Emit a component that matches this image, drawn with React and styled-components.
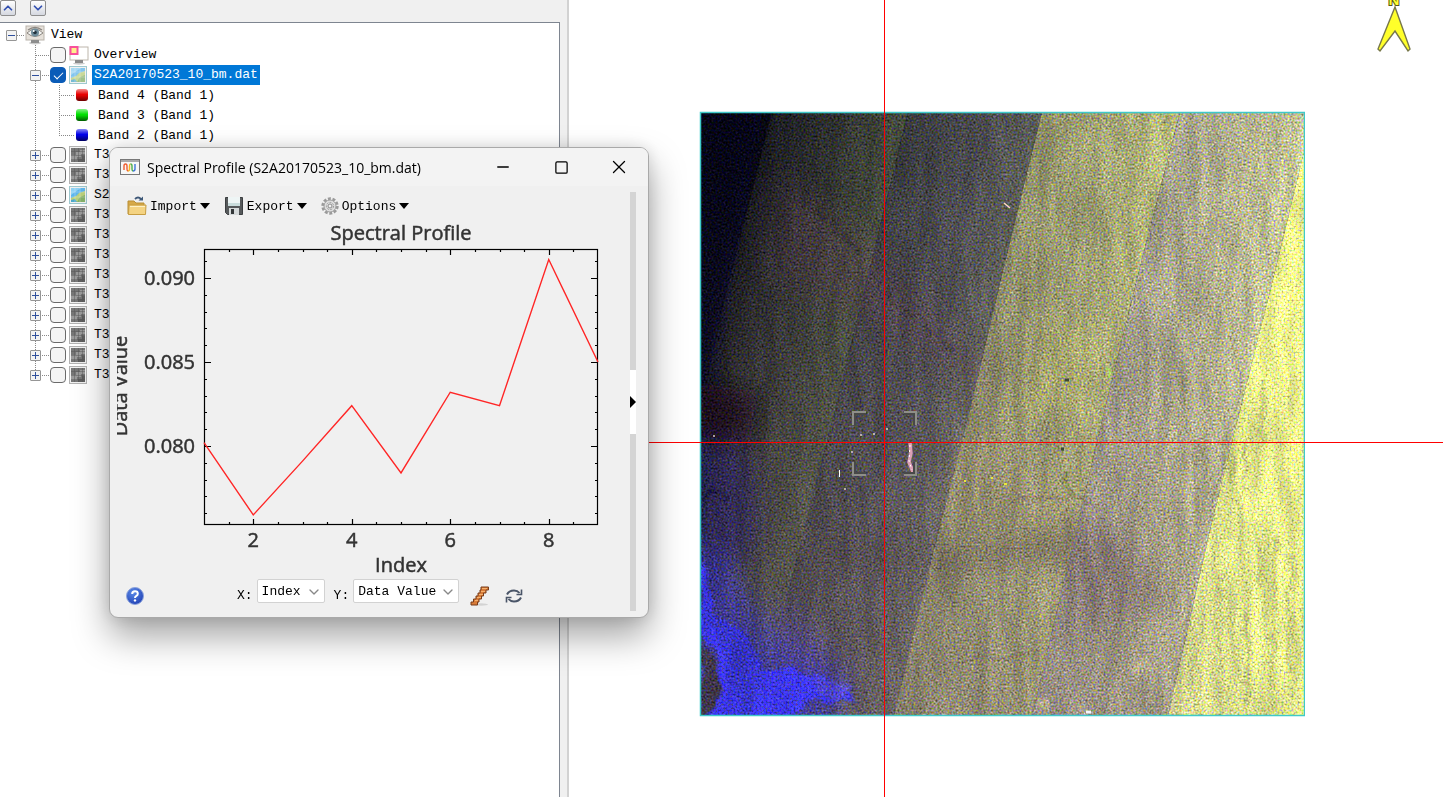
import { useState } from "react";
import styled, { createGlobalStyle } from "styled-components";
import { ChevronUp, ChevronDown, Minus, Square, X } from "lucide-react";

const bands = [
  { name: "Band 4 (Band 1)", color: "#e80000", dark: "#6d0000" },
  { name: "Band 3 (Band 1)", color: "#00e000", dark: "#005c00" },
  { name: "Band 2 (Band 1)", color: "#0000e8", dark: "#00005e" },
];

const layers = ["T3", "T3", "S2", "T3", "T3", "T3", "T3", "T3", "T3", "T3", "T3", "T3"];

const profile = [0.0802, 0.0759, 0.0791, 0.0824, 0.0784, 0.0832, 0.0824, 0.0911, 0.085];

const EyeIcon = () => (
  <svg width="20" height="20" viewBox="0 0 20 20">
    <rect x="1" y="1" width="18" height="14" fill="#e6e1da" stroke="#b9b3ab" />
    <ellipse cx="10" cy="18" rx="6" ry="1.5" fill="#ccc" />
    <rect x="6" y="15" width="8" height="3" fill="#8d8d8d" />
    <path d="M2 8Q10 0 18 8Q10 15 2 8Z" fill="#f4f4f2" stroke="#8b8680" />
    <path d="M3 5Q10 0 17 5" fill="none" stroke="#8b8680" strokeWidth="1.5" />
    <circle cx="10" cy="7.5" r="4" fill="#6e8c9a" />
    <circle cx="10" cy="7.5" r="1.8" fill="#22323c" />
    <circle cx="8.7" cy="6" r="1" fill="#fff" />
  </svg>
);

const OverviewIcon = () => (
  <svg width="20" height="20" viewBox="0 0 20 20">
    <rect x="1" y="2" width="18" height="13" fill="#fff" stroke="#bdb6ab" />
    <ellipse cx="10" cy="18.5" rx="6" ry="1.2" fill="#ccc" />
    <rect x="6" y="15" width="8" height="3" fill="#8a8a8a" />
    <rect x="1.5" y="2" width="7" height="7" fill="#ffef8d" stroke="#f8509c" strokeWidth="2" />
  </svg>
);

const RasterIcon = ({ color, faded }) => (
  <svg width="18" height="20" viewBox="0 0 18 20">
    <rect x="0.5" y="1.5" width="17" height="17" fill="#f1f1f1" stroke={color ? "#9fc9cf" : "#b3b3b3"} />
    {color ? (
      <g opacity={faded ? 0.75 : 1}>
        <rect x="2" y="3" width="14" height="14" fill="#5fb7ee" />
        <path d="M2 10L9 5L12 3H2Z" fill="#8fd2f5" />
        <path d="M2 13L7 11L10 8L16 6V17H2Z" fill="#bcd27c" />
        <path d="M8 17L11 12L16 10V17Z" fill="#86b36a" />
        <path d="M2 15L6 14L8 17H2Z" fill="#4eaacb" />
        <path d="M6 3V17M11 3V17M2 7H16M2 12H16" stroke="#fff" strokeOpacity="0.25" />
      </g>
    ) : (
      <g>
        <rect x="2" y="3" width="14" height="14" fill="#777" />
        <path d="M2 10H7V7H11V5H16V9H12V12H8V15H2Z" fill="#9b9b9b" />
        <path d="M9 17V14H13V11H16V17Z" fill="#606060" />
        <path d="M5.5 3V17M9.5 3V17M13.5 3V17M2 6.5H16M2 10.5H16M2 14.5H16" stroke="#565656" strokeOpacity="0.45" />
      </g>
    )}
  </svg>
);

const ProfileIcon = () => (
  <svg width="20" height="16" viewBox="0 0 20 16">
    <rect x="0.5" y="0.5" width="19" height="15" fill="#f7f7f7" stroke="#777" />
    <rect x="1" y="1" width="18" height="2" fill="#aaa" />
    <path d="M4 11V7Q4 5 5.500 5T7 7V10Q7 12 8 12" fill="none" stroke="#ef5c2f" strokeWidth="1.4" />
    <path d="M8 12Q9.500 12 9.500 10V7Q9.500 5 10.500 5" fill="none" stroke="#f5b326" strokeWidth="1.4" />
    <path d="M10.500 5Q12 5 12 7V10Q12 12 13 12" fill="none" stroke="#4baf4c" strokeWidth="1.4" />
    <path d="M13 12Q15 12 15 10V5" fill="none" stroke="#3d74d8" strokeWidth="1.4" />
  </svg>
);

const FolderIcon = () => (
  <svg width="20" height="20" viewBox="0 0 20 20">
    <path d="M1 5H7L9 7H17V18H1Z" fill="#d7a947" stroke="#b98e35" />
    <path d="M8 3Q11 0 14 3" fill="none" stroke="#3e5878" strokeWidth="1.8" />
    <path d="M11.500 4.500H16V0.500Z" fill="#3e5878" />
    <path d="M2 9H19L18.500 18.500H1.500Z" fill="#f4d382" stroke="#c79d42" />
    <path d="M3 10.500H18" stroke="#fff1c4" />
  </svg>
);

const DiskIcon = () => (
  <svg width="20" height="20" viewBox="0 0 20 20">
    <path d="M1.500 1.500H18.500V18.500H3.500L1.500 16.500Z" fill="#56595b" stroke="#3c3f41" />
    <rect x="4" y="1" width="12" height="9" fill="#eef5f5" />
    <path d="M4 7H16V10H4Z" fill="#c9dcdc" />
    <rect x="5" y="12" width="10" height="7" fill="#d5d9da" />
    <rect x="7" y="13" width="3" height="5" fill="#333638" />
  </svg>
);

const GearIcon = () => (
  <svg width="18" height="18" viewBox="0 0 18 18">
    <circle cx="9" cy="9" r="7.2" fill="none" stroke="#9a9a9a" strokeWidth="3" strokeDasharray="2.9 1.62" />
    <circle cx="9" cy="9" r="6" fill="#dedede" stroke="#a0a0a0" />
    <circle cx="9" cy="9" r="3.6" fill="none" stroke="#9c9c9c" strokeDasharray="2 1.2" />
    <circle cx="9" cy="9" r="2" fill="#f1f1f1" stroke="#8b8b8b" />
  </svg>
);

const HelpIcon = () => (
  <svg width="20" height="20" viewBox="0 0 20 20">
    <defs>
      <radialGradient id="help" cx="0.4" cy="0.3" r="0.8">
        <stop offset="0" stopColor="#5b8ae8" />
        <stop offset="1" stopColor="#1c3bb0" />
      </radialGradient>
    </defs>
    <circle cx="10" cy="10" r="8.5" fill="url(#help)" stroke="#8da4dc" />
    <path d="M7.200 8Q7.200 5.300 10 5.300T12.800 7.700Q12.800 9 11.400 9.800T10 12" fill="none" stroke="#fff" strokeWidth="2" />
    <circle cx="10" cy="14.4" r="1.2" fill="#fff" />
  </svg>
);

const StairsIcon = () => (
  <svg width="20" height="20" viewBox="0 0 20 20">
    <ellipse cx="11" cy="18.5" rx="7" ry="1.2" fill="#d3d3d3" />
    <path d="M11 1H18.500V4H16V7H13.500V10H11.500V13H9V16H7.500V19H1V16H3.500V13H6V10H8V7H10V4H11Z" fill="#d97c38" stroke="#793d1b" />
    <path d="M12 2.500H17M11 5.500H15M9 8.500H13M7 11.500H11M5 14.500H8" stroke="#f5b06d" />
  </svg>
);

const RefreshIcon = () => (
  <svg width="18" height="16" viewBox="0 0 18 16" fill="none" stroke="#4a5568" strokeWidth="2">
    <path d="M2 6.500Q4 2.500 9 2.500Q12.500 2.500 14.500 5" />
    <path d="M16.500 1.500V6.500H11.500" strokeWidth="1.6" />
    <path d="M16 9.500Q14 13.500 9 13.500Q5.500 13.500 3.500 11" />
    <path d="M1.500 14.500V9.500H6.500" strokeWidth="1.6" />
  </svg>
);

const NorthArrow = () => (
  <svg width="36" height="54" viewBox="0 0 36 54">
    <text x="18" y="5" textAnchor="middle" fontSize="15" fontWeight="bold" fill="#ffff30" stroke="#55551c" strokeWidth="2" paintOrder="stroke">N</text>
    <path d="M19 7L34 49L32 51L19 31L4 51L2 49Z" fill="#ffff2a" stroke="#77774a" strokeWidth="1.4" />
  </svg>
);

const SpectralChart = () => {
  const px = (v) => 87 + (v - 1) * 49.25;
  const py = (v) => 56 + (0.09 - v) * 16800;
  const points = profile.map((v, i) => `${px(i + 1)},${py(v)}`).join(" ");
  const xTicks = Array.from({ length: 15 }, (_, i) => 1.5 + i * 0.5);
  const yTicks = Array.from({ length: 16 }, (_, i) => 76 + i);

  return (
    <ChartSvg viewBox="0 -6 500 362" role="img" aria-label="Spectral Profile">
      <rect x="87.5" y="27.5" width="393" height="275" fill="none" stroke="#000" strokeWidth="1.2" />
      {xTicks.map((v) => {
        const len = v % 2 === 0 ? 6 : 3;
        const x = Math.round(px(v)) + 0.5;
        return <path key={v} d={`M${x} 27v${len}M${x} 303v-${len}`} stroke="#000" strokeWidth="1.2" />;
      })}
      {yTicks.map((v) => {
        const len = v % 5 === 0 ? 7 : 3;
        const y = Math.round(py(v / 1000)) + 0.5;
        return <path key={v} d={`M87 ${y}h${len}M481 ${y}h-${len}`} stroke="#000" strokeWidth="1.2" />;
      })}
      <polyline points={points} fill="none" stroke="#ff2626" strokeWidth="1.4" />
      <g stroke="#333" strokeWidth="0.5">
        <text x="284" y="18" textAnchor="middle">Spectral Profile</text>
        <text x="284" y="350" textAnchor="middle">Index</text>
        <text transform="translate(10 164) rotate(-90)" textAnchor="middle">Data Value</text>
        {[2, 4, 6, 8].map((v) => (
          <text key={v} x={px(v)} y="325" textAnchor="middle">{v}</text>
        ))}
        {[0.09, 0.085, 0.08].map((v) => (
          <text key={v} x="78" y={py(v) + 7} textAnchor="end">{v.toFixed(3)}</text>
        ))}
      </g>
    </ChartSvg>
  );
};

const SatelliteScene = () => (
  <svg width="606" height="606" viewBox="-1 -1 606 606">
    <defs>
      <linearGradient id="s0" x1="0" y1="0" x2="0" y2="1">
        <stop offset="0" stopColor="#070716" />
        <stop offset="1" stopColor="#15152e" />
      </linearGradient>
      <linearGradient id="s1" gradientUnits="userSpaceOnUse" x1="62" y1="0" x2="200" y2="34">
        <stop offset="0" stopColor="#17181f" />
        <stop offset="0.5" stopColor="#2b2d2c" />
        <stop offset="1" stopColor="#454b3e" />
      </linearGradient>
      <linearGradient id="s2" gradientUnits="userSpaceOnUse" x1="208" y1="0" x2="334" y2="32">
        <stop offset="0" stopColor="#37393c" />
        <stop offset="0.6" stopColor="#4a4a4e" />
        <stop offset="1" stopColor="#5c5e58" />
      </linearGradient>
      <linearGradient id="s3" gradientUnits="userSpaceOnUse" x1="342" y1="0" x2="472" y2="32">
        <stop offset="0" stopColor="#8d8d68" />
        <stop offset="0.6" stopColor="#a1a275" />
        <stop offset="1" stopColor="#b4b67c" />
      </linearGradient>
      <linearGradient id="s4" gradientUnits="userSpaceOnUse" x1="480" y1="0" x2="610" y2="32">
        <stop offset="0" stopColor="#a29f88" />
        <stop offset="0.6" stopColor="#b6b490" />
        <stop offset="1" stopColor="#c6c79a" />
      </linearGradient>
      <linearGradient id="s5" x1="1" y1="0" x2="0" y2="1">
        <stop offset="0" stopColor="#fbff8e" />
        <stop offset="0.6" stopColor="#e0e58c" />
        <stop offset="1" stopColor="#cac98c" />
      </linearGradient>
      <linearGradient id="warm" x1="0" y1="0" x2="0" y2="1">
        <stop offset="0.1" stopColor="#7b6a70" stopOpacity="0" />
        <stop offset="1" stopColor="#7b6a70" stopOpacity="0.45" />
      </linearGradient>
      <filter id="grain" x="0" y="0" width="100%" height="100%" colorInterpolationFilters="sRGB">
        <feTurbulence type="fractalNoise" baseFrequency="0.5" numOctaves="2" seed="4" result="n" />
        <feColorMatrix in="n" values="1.5 0.3 0 0 -0.4  0.5 1.3 0 0 -0.4  0 0 2.6 0 -0.8  0 0 0 0 1" result="fine" />
        <feTurbulence type="fractalNoise" baseFrequency="0.08 0.014" numOctaves="3" seed="21" />
        <feColorMatrix values="2 0 0 0 -0.5  2 0 0 0 -0.5  2 0 0 0 -0.5  0 0 0 0 1" result="streak" />
        <feComposite in="SourceGraphic" in2="fine" operator="arithmetic" k1="0.6" k2="0.7" k3="0.18" k4="-0.08" result="a" />
        <feComposite in="a" in2="streak" operator="arithmetic" k1="0.18" k2="0.91" />
      </filter>
      <filter id="soft" filterUnits="userSpaceOnUse" x="-100" y="-100" width="804" height="804">
        <feGaussianBlur stdDeviation="12" />
      </filter>
      <filter id="rough" filterUnits="userSpaceOnUse" x="-50" y="-50" width="704" height="704">
        <feTurbulence type="fractalNoise" baseFrequency="0.04" numOctaves="4" result="t" />
        <feDisplacementMap in="SourceGraphic" in2="t" scale="16" xChannelSelector="R" yChannelSelector="G" />
        <feGaussianBlur stdDeviation="1.2" />
      </filter>
      <clipPath id="frame">
        <rect width="604" height="604" />
      </clipPath>
      <clipPath id="strip5">
        <path d="M604 40V604H468L510 418L545 278L573 168Z" />
      </clipPath>
    </defs>
    <g clipPath="url(#frame)">
      <g filter="url(#grain)">
        <rect width="604" height="604" fill="url(#s0)" />
        <path d="M72 0H208L135 298L73 540L58 604H0V300L22 200Z" fill="url(#s1)" />
        <path d="M208 0H342L305 150L270 298L230 453L194 604H58L73 540L135 298Z" fill="url(#s2)" />
        <path d="M342 0H480L443 143L407 288L332 604H194L230 453L270 298L305 150Z" fill="url(#s3)" />
        <path d="M480 0H604V40L573 168L545 278L510 418L468 604H332L407 288L443 143Z" fill="url(#s4)" />
        <path d="M604 40V604H468L510 418L545 278L573 168Z" fill="url(#s5)" />
        <path d="M0 0H604L468 604H0Z" fill="url(#warm)" />
        <g filter="url(#soft)">
          <path d="M-20 -20H66L45 100L25 230L0 440H-20Z" fill="#02020e" opacity="0.6" />
          <path d="M80 60L170 130L280 250L300 290L210 230L70 160Z" fill="#584050" opacity="0.3" />
          <path d="M105 424Q200 455 290 430T375 380L360 450Q240 470 110 445Z" fill="#4a3f3a" opacity="0.35" />
          <path d="M375 400L425 420L470 490L380 520L360 450Z" fill="#705f64" opacity="0.5" />
          <path d="M350 200L400 220L385 300L310 310Z" fill="#c4c26a" opacity="0.3" />
          <path d="M-10 330L50 340L60 430L-10 500Z" fill="#262260" opacity="0.6" />
          <path d="M-20 430L20 440L80 530L150 560L130 624H-20Z" fill="#3531a8" opacity="0.65" />
          <path d="M80 480L130 540L150 580L80 570Z" fill="#4b3d96" opacity="0.5" />
          <path d="M265 310L380 400L350 420L240 410Z" fill="#a59777" opacity="0.3" />
          <path d="M0 270L60 280L50 330L0 330Z" fill="#0b0a12" opacity="0.6" />
        </g>
        <g filter="url(#rough)">
          <path d="M0 448L8 462L10 500L18 530L35 522L50 550L68 560L100 556L130 566L152 582L155 590L112 588L86 606H10L22 580L15 540L0 520Z" fill="#3a35f0" />
          <path d="M5 500L45 520L62 552L52 604H36L34 570Z" fill="#3430c8" />
          <path d="M0 530L12 545L22 575L10 604H0Z" fill="#3a3146" />
          <path d="M108 560L152 572L150 590L122 584Z" fill="#5348c0" opacity="0.7" />
          <path d="M88 68L93 78M104 80L110 95M118 95L124 108M130 105L138 122M143 118L150 130M152 132L160 142M184 178L192 190M205 200L212 208M226 215L232 225M246 230L252 240" stroke="#1d1f24" strokeWidth="3" opacity="0.35" />
          <path d="M0 388L14 378L28 388" fill="none" stroke="#0c0b28" strokeWidth="2" opacity="0.7" />
          <path d="M366 358L370 385" stroke="#6b6f39" strokeWidth="5" opacity="0.5" />
          <path d="M310 390L375 386L400 394" fill="none" stroke="#6f5d54" strokeWidth="3" opacity="0.4" />
          <path d="M265 546L345 543" stroke="#6d6050" strokeWidth="2" opacity="0.5" />
          <path d="M335 590L350 594M430 565L450 550" stroke="#d5c8a0" strokeWidth="8" opacity="0.4" />
          <g clipPath="url(#strip5)" stroke="#8c8c5c" strokeWidth="6" opacity="0.3">
            <path d="M558 410V470M575 425V500M530 300V370M560 270V330M590 440V560M545 330V380M520 460V560M572 520V600M548 500V590" />
          </g>
          <path d="M525 340L518 388M497 330V400M480 250V290" stroke="#7f7d66" strokeWidth="6" opacity="0.35" />
        </g>
      </g>
      <path d="M304 91L310 96" stroke="#ffd7c4" strokeWidth="1.5" />
      <path d="M210 331L211 341L209 350L213 360" fill="none" stroke="#dba0b4" strokeWidth="3.5" />
      <path d="M210 333L209 349L212 358" fill="none" stroke="#fff" strokeDasharray="2 3" />
      <path d="M139.500 358V365" stroke="#fff" />
      <path d="M145 376v2M152 339v2M161 322v2M187 316v2M174 321v2M153 303v2M14 323v2" stroke="#e6d9d4" strokeWidth="1.4" />
      <path d="M264 369h2M304 372h3M291 366h2" stroke="#e8e83c" strokeWidth="2" />
      <path d="M406 256L410 258L409 266" fill="none" stroke="#a6ff3d" strokeWidth="2" opacity="0.6" />
      <path d="M365 268h4M361 337h3" stroke="#3d4933" strokeWidth="3" />
      <path d="M386 600h5" stroke="#f4f4ff" strokeWidth="3" />
    </g>
    <rect x="0.5" y="0.5" width="604" height="603" fill="none" stroke="#3fc9c9" strokeWidth="1.5" />
    <path d="M155 313V302H166M204 302H214V313M155 350V361H166M204 361H214V350" fill="none" stroke="#484848" strokeWidth="2" />
    <path d="M153 313V300H166M204 300H216V313M153 350V363H166M204 363H216V350" fill="none" stroke="#8e8e88" strokeWidth="2" />
  </svg>
);

const App = () => {
  const [active, setActive] = useState(true);

  return (
    <Page>
      <GlobalStyle />
      <LayerPanel>
        <PanelTools>
          <StepButton aria-label="Move up"><ChevronUp size={14} strokeWidth={3} /></StepButton>
          <StepButton aria-label="Move down"><ChevronDown size={14} strokeWidth={3} /></StepButton>
        </PanelTools>
        <Tree>
          <RootRow>
            <Toggle aria-label="Collapse View" />
            <Dots />
            <EyeIcon />
            <RowLabel as="span">View</RowLabel>
          </RootRow>
          <Row>
            <Branch $leaf />
            <Dots />
            <Check type="checkbox" id="overview" />
            <IconCell><OverviewIcon /></IconCell>
            <RowLabel htmlFor="overview">Overview</RowLabel>
          </Row>
          <Row>
            <Branch><Toggle aria-label="Collapse layer" /></Branch>
            <Dots />
            <Check type="checkbox" id="s2a" checked={active} onChange={() => setActive(!active)} />
            <IconCell><RasterIcon color faded /></IconCell>
            <RowLabel htmlFor="s2a" $selected>S2A20170523_10_bm.dat</RowLabel>
          </Row>
          {bands.map((band, i) => (
            <Row key={band.name}>
              <Branch />
              <BandBranch $last={i === bands.length - 1} />
              <Swatch $color={band.color} $dark={band.dark} />
              <BandName>{band.name}</BandName>
            </Row>
          ))}
          {layers.map((name, i) => (
            <Row key={i}>
              <Branch $last={i === layers.length - 1}><Toggle $plus aria-label="Expand layer" /></Branch>
              <Dots />
              <Check type="checkbox" id={`layer${i}`} />
              <IconCell><RasterIcon color={name === "S2"} /></IconCell>
              <RowLabel htmlFor={`layer${i}`}>{name}</RowLabel>
            </Row>
          ))}
        </Tree>
      </LayerPanel>

      <MapView>
        <ScenePlace><SatelliteScene /></ScenePlace>
        <CrossH />
        <CrossV />
        <ArrowPlace><NorthArrow /></ArrowPlace>
      </MapView>

      <Dialog role="dialog" aria-labelledby="dialog-title">
        <TitleBar>
          <ProfileIcon />
          <Title id="dialog-title">Spectral Profile (S2A20170523_10_bm.dat)</Title>
          <WindowButton aria-label="Minimize"><Minus size={18} strokeWidth={1.8} /></WindowButton>
          <WindowButton aria-label="Maximize"><Square size={15} strokeWidth={2} /></WindowButton>
          <WindowButton aria-label="Close"><X size={22} strokeWidth={1.4} /></WindowButton>
        </TitleBar>
        <DialogBody>
          <PlotColumn>
            <Menu>
              <MenuButton><FolderIcon />Import<Caret /></MenuButton>
              <MenuButton><DiskIcon />Export<Caret /></MenuButton>
              <MenuButton><GearIcon />Options<Caret /></MenuButton>
            </Menu>
            <SpectralChart />
            <AxisBar>
              <IconButton aria-label="Help"><HelpIcon /></IconButton>
              <AxisFields>
                <AxisLabel htmlFor="x-axis">X:</AxisLabel>
                <SelectWrap $width="68px">
                  <Select id="x-axis"><option>Index</option></Select>
                  <ChevronDown size={16} strokeWidth={2} />
                </SelectWrap>
                <AxisLabel htmlFor="y-axis">Y:</AxisLabel>
                <SelectWrap $width="106px">
                  <Select id="y-axis"><option>Data Value</option></Select>
                  <ChevronDown size={16} strokeWidth={2} />
                </SelectWrap>
              </AxisFields>
              <IconButton aria-label="Stack plots"><StairsIcon /></IconButton>
              <IconButton aria-label="Reset"><RefreshIcon /></IconButton>
            </AxisBar>
          </PlotColumn>
          <Splitter>
            <SplitterButton aria-label="Show side panel"><SideCaret /></SplitterButton>
          </Splitter>
        </DialogBody>
      </Dialog>
    </Page>
  );
};

export default App;

const GlobalStyle = createGlobalStyle`
  * {
    box-sizing: border-box;
  }
  body {
    margin: 0;
    overflow: hidden;
    font-family: "Liberation Mono", "Noto Sans CJK SC", monospace;
    font-size: 13px;
    color: #000;
    background: #fff;
  }
  button, select, input {
    font: inherit;
    color: inherit;
    margin: 0;
    padding: 0;
  }
  button {
    border: 0;
    background: none;
  }
  svg {
    display: block;
    flex: none;
  }
`;

const dotsX = "repeating-linear-gradient(90deg, #888 0 1px, transparent 1px 2px)";
const dotsY = "repeating-linear-gradient(180deg, #888 0 1px, transparent 1px 2px)";

const Page = styled.div`
  position: relative;
  display: flex;
  min-height: 100vh;
`;

const LayerPanel = styled.aside`
  display: flex;
  flex-direction: column;
  flex: none;
  width: 569px;
  padding-right: 7px;
  background: #f0f0f0;
  border-right: 2px solid #d2d2d2;
`;

const PanelTools = styled.div`
  display: flex;
  gap: 14px;
  height: 22px;
`;

const StepButton = styled.button`
  display: flex;
  align-items: center;
  justify-content: center;
  width: 16px;
  height: 16px;
  color: #3350b0;
  background: linear-gradient(#fff, #d5d8e0);
  border: 1px solid #8e8e8e;
  border-radius: 2px;
`;

const Tree = styled.div`
  flex: 1;
  padding-top: 2px;
  background: #fff;
  border-top: 1px solid #7e8590;
  border-right: 1px solid #7e8590;
`;

const Row = styled.div`
  display: flex;
  align-items: center;
  height: 20px;
  padding-left: 30px;
`;

const RootRow = styled(Row)`
  padding-left: 6px;
`;

const Branch = styled.span`
  display: flex;
  align-items: center;
  align-self: stretch;
  width: 12px;
  background: ${(p) => (p.$leaf ? `${dotsX} 6px 10px / 6px 1px no-repeat, ` : "")}
    ${dotsY} 5px 0 / 1px ${(p) => (p.$last ? "10px" : "100%")} no-repeat;
`;

const BandBranch = styled.span`
  align-self: stretch;
  width: 15px;
  margin: 0 2px 0 17px;
  background: ${dotsX} 0 10px / 100% 1px no-repeat,
    ${dotsY} 0 0 / 1px ${(p) => (p.$last ? "10px" : "100%")} no-repeat;
`;

const Dots = styled.span`
  width: 8px;
  height: 1px;
  background: ${dotsX};
`;

const Toggle = styled.button`
  flex: none;
  width: 11px;
  height: 11px;
  border: 1px solid #969696;
  border-radius: 1px;
  background: linear-gradient(#2f4f9c, #2f4f9c) center / 7px 1px no-repeat,
    linear-gradient(#2f4f9c, #2f4f9c) center / 1px ${(p) => (p.$plus ? "7px" : "0")} no-repeat,
    #f3f3f3;
`;

const Check = styled.input`
  appearance: none;
  flex: none;
  width: 16px;
  height: 16px;
  border: 1px solid #6a6a6a;
  border-radius: 4px;
  background: #f4f4f4;

  &:checked {
    background: #0a5cb8;
    border-color: #0a5cb8;
  }
  &:checked::after {
    content: "";
    display: block;
    width: 8px;
    height: 4px;
    margin: 4px 3px;
    border: solid #fff;
    border-width: 0 0 1px 1px;
    transform: rotate(-45deg);
  }
`;

const IconCell = styled.span`
  display: flex;
  width: 20px;
  margin: 0 3px;
`;

const RowLabel = styled.label`
  height: 20px;
  line-height: 20px;
  margin-left: ${(p) => (p.htmlFor ? "0" : "4px")};
  padding: 0 2px;
  color: ${(p) => (p.$selected ? "#fff" : "#000")};
  background: ${(p) => (p.$selected ? "#0078d7" : "none")};
`;

const Swatch = styled.span`
  width: 12px;
  height: 12px;
  border-radius: 3px;
  background: linear-gradient(#fff8, transparent 45%), linear-gradient(${(p) => p.$color} 50%, ${(p) => p.$dark});
`;

const BandName = styled.span`
  margin-left: 10px;
`;

const MapView = styled.main`
  position: relative;
  flex: 1;
  overflow: hidden;
  background: #fff;
`;

const ScenePlace = styled.div`
  position: absolute;
  left: 130px;
  top: 111px;
`;

const CrossH = styled.div`
  position: absolute;
  left: 0;
  right: 0;
  top: 442px;
  height: 1px;
  background: #f00;
`;

const CrossV = styled.div`
  position: absolute;
  top: 0;
  bottom: 0;
  left: 315px;
  width: 1px;
  background: #f00;
`;

const ArrowPlace = styled.div`
  position: absolute;
  top: 0;
  right: 31px;
  font-family: "Liberation Sans", sans-serif;
`;

const Dialog = styled.section`
  position: absolute;
  left: 109px;
  top: 147px;
  width: 540px;
  overflow: hidden;
  background: #f0f0f0;
  border: 1px solid #a9a9a9;
  border-radius: 9px;
  box-shadow: 0 18px 36px rgba(0, 0, 0, 0.36), 0 0 16px rgba(0, 0, 0, 0.12);
`;

const TitleBar = styled.header`
  display: flex;
  align-items: center;
  height: 38px;
  padding-left: 10px;
  background: #f3f3f3;
`;

const Title = styled.h1`
  flex: 1;
  margin: 0 0 0 7px;
  font-family: "Open Sans", "Noto Sans", sans-serif;
  font-size: 14px;
  font-weight: 400;
`;

const WindowButton = styled.button`
  display: flex;
  align-items: center;
  justify-content: center;
  width: 58px;
  height: 38px;
`;

const DialogBody = styled.div`
  display: flex;
  justify-content: space-between;
  padding: 6px 12px 6px 7px;
`;

const PlotColumn = styled.div`
  display: flex;
  flex-direction: column;
  width: 500px;
`;

const Menu = styled.nav`
  display: flex;
  align-items: flex-end;
  gap: 14px;
  height: 24px;
  padding-left: 10px;
`;

const MenuButton = styled.button`
  display: flex;
  align-items: center;
  gap: 3px;
  height: 20px;
`;

const Caret = styled.span`
  border: solid transparent;
  border-width: 6px 5px 0;
  border-top-color: #000;
`;

const ChartSvg = styled.svg`
  width: 100%;
  overflow: hidden;
  font-family: "Open Sans", "Noto Sans", sans-serif;
  font-size: 20px;
  fill: #333;
`;

const AxisBar = styled.div`
  display: flex;
  align-items: flex-start;
  gap: 15px;
  height: 33px;
  padding-left: 8px;
`;

const IconButton = styled.button`
  display: flex;
  align-items: center;
  height: 20px;
  margin-top: 8px;
`;

const AxisFields = styled.div`
  display: flex;
  gap: 4px;
  margin: 1px -4px 0 72px;
`;

const AxisLabel = styled.label`
  padding: 9px 0 0 5px;
`;

const SelectWrap = styled.div`
  position: relative;
  width: ${(p) => p.$width};

  svg {
    position: absolute;
    right: 3px;
    top: 5px;
    color: #888;
    pointer-events: none;
  }
`;

const Select = styled.select`
  appearance: none;
  width: 100%;
  height: 24px;
  padding-left: 4px;
  background: #fff;
  border: 1px solid #d2d2d2;
  border-radius: 2px;
`;

const Splitter = styled.div`
  display: flex;
  align-items: center;
  width: 6px;
  background: #d4d4d4;
`;

const SplitterButton = styled.button`
  display: flex;
  align-items: center;
  width: 6px;
  height: 64px;
  background: #fff;
`;

const SideCaret = styled.span`
  border: solid transparent;
  border-width: 6px 0 6px 6px;
  border-left-color: #000;
`;
